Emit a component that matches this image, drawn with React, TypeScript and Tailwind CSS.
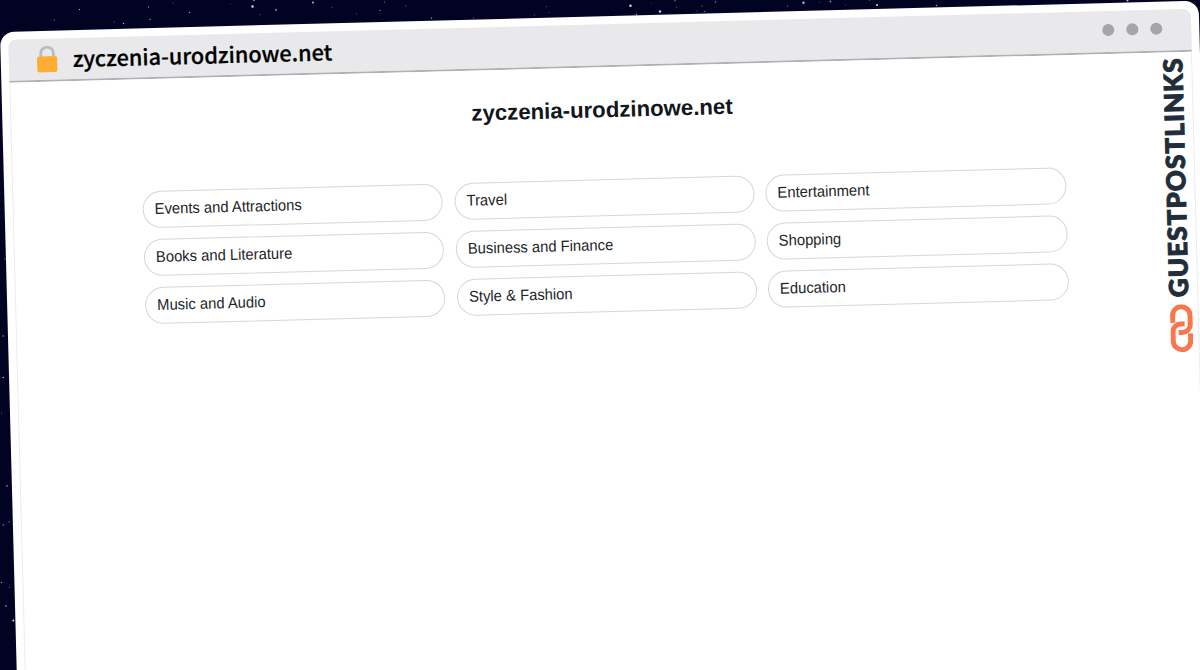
const categories = [
  "Events and Attractions",
  "Travel",
  "Entertainment",
  "Books and Literature",
  "Business and Finance",
  "Shopping",
  "Music and Audio",
  "Style & Fashion",
  "Education",
];

// x, y, radius, opacity
const stars = [
  [79.5, 9.5, 0.7, 0.7], [54.5, 20, 0.6, 0.6], [148.5, 7, 0.7, 0.6], [173, 3, 0.5, 0.5],
  [189.5, 12.5, 0.8, 0.6], [150, 19.5, 0.7, 0.7], [123.5, 23.5, 0.7, 0.8], [114.5, 22, 0.5, 0.5],
  [252.5, 6.5, 1.3, 0.9], [254, 0.5, 0.8, 0.7], [230.5, 4, 0.5, 0.4], [276, 10, 1, 0.6],
  [260, 14.5, 0.6, 0.4], [313, 2.5, 0.9, 0.9], [332, 7.5, 0.6, 0.4], [356.5, 14, 0.6, 0.4],
  [384.5, 2, 0.7, 0.4], [380, 10.5, 0.8, 0.5], [405.5, 6, 0.8, 0.3], [431.5, 18, 0.7, 0.7],
  [473.5, 18, 0.6, 0.6], [546.5, 6.5, 0.7, 0.3], [534.5, 15, 0.7, 0.3], [549, 12.5, 0.6, 0.3],
  [630.5, 5.8, 1.3, 0.9], [660, 11.5, 1.2, 0.9], [636.5, 14.5, 0.7, 0.7], [651, 3, 0.6, 0.3],
  [675, 0.5, 0.9, 0.4], [676.5, 7, 0.6, 0.4], [702, 6, 0.7, 0.4], [715.5, 2, 0.8, 0.6],
  [704.5, 11.5, 0.7, 0.5], [697, 11, 0.6, 0.4], [787.5, 6, 0.7, 0.4], [803.5, 2.8, 1.2, 0.8],
  [819.5, 2, 0.5, 0.4], [830.5, 1.5, 0.9, 0.6], [845.5, 5, 0.6, 0.3], [869.5, 0.5, 0.6, 0.4],
  [877, 5, 1.1, 0.9], [936.5, 5.5, 0.8, 0.7], [1127.5, 0.5, 0.9, 0.9],
  [5, 259, 0.7, 0.5], [3.2, 336, 0.8, 0.6], [3.2, 377.5, 0.8, 0.8], [1.5, 413, 0.6, 0.5],
  [7, 486, 0.9, 0.5], [3.3, 525, 0.8, 0.6], [9, 522, 0.8, 0.4], [1.5, 582.5, 0.8, 0.6],
  [9.5, 587.5, 0.6, 0.4], [6, 606, 0.9, 0.5], [13.3, 620.5, 0.9, 1],
];

const StarrySky = () => (
  <svg className="absolute inset-0 h-full w-full" viewBox="0 0 1200 670">
    {stars.map(([x, y, r, o], index) => (
      <circle key={index} cx={x} cy={y} r={r} fill="#dfe2ff" opacity={o} />
    ))}
  </svg>
);

const LockIcon = () => (
  <svg className="h-[27px] w-[21px]" viewBox="0 0 21 27">
    <path d="M4.2 13V7.6a6.3 6.3 0 0 1 12.6 0V13" fill="none" stroke="#b3bdc2" strokeWidth="2.8" />
    <rect x="0.3" y="10.5" width="20.2" height="16" rx="2.2" fill="#ffac33" />
  </svg>
);

const ChainIcon = () => (
  <svg className="h-[48px] w-[23px]" viewBox="0 0 23 48" fill="none" stroke="#f9774c" strokeWidth="5">
    <path d="M2.8 18.5V11.2a8.6 8.6 0 0 1 17.4 0V20.5a7.8 7.8 0 0 1-7.8 7.8H8.4" />
    <path d="M20.2 29.5V36.8a8.6 8.6 0 0 1-17.4 0V27.5a7.8 7.8 0 0 1 7.8-7.8h4" />
  </svg>
);

const BrowserBar = () => (
  <div className="flex h-[43px] items-center justify-between rounded-t-[8px] border-b-2 border-[#b0b1b4] bg-[#e9e9eb] pr-[29px] pl-[28px]">
    <div className="flex items-center">
      <LockIcon />
      <p className="mb-[1px] ml-[15px] font-['Noto_Sans_CJK_JP',sans-serif] text-[21.7px] leading-[30px] font-medium text-black [-webkit-text-stroke:0.25px_#000]">
        zyczenia-urodzinowe.net
      </p>
    </div>
    <div className="mb-[4px] flex gap-[12px]">
      <span className="h-3 w-3 rounded-full bg-[#a5a6aa]" />
      <span className="h-3 w-3 rounded-full bg-[#a5a6aa]" />
      <span className="h-3 w-3 rounded-full bg-[#a5a6aa]" />
    </div>
  </div>
);

const CategoryPage = () => (
  <div className="pt-[27px] pl-px text-[#212529]">
    <h1 className="text-center text-[22.2px] leading-[32px] font-bold text-[#13171c]">
      zyczenia-urodzinowe.net
    </h1>
    <div className="mx-auto mt-[53px] grid w-[924px] grid-cols-3 gap-x-[11.5px] gap-y-[11px]">
      {categories.map((item) => (
        <div
          key={item}
          className="flex h-[37px] items-center rounded-full border border-[#d6d7d9] px-[11px] pb-[2px] text-[15.6px]"
        >
          <span className="origin-left scale-x-[0.948]">{item}</span>
        </div>
      ))}
    </div>
  </div>
);

const App = () => {
  return (
    <div className="relative h-[670px] w-[1200px] overflow-hidden bg-[#020323] font-['Liberation_Sans',Arial,sans-serif]">
      <StarrySky />
      <div className="relative mt-[31.5px] h-[760px] w-[1198.5px] origin-top-left -rotate-[1.5deg] rounded-[14px] bg-white p-[8px]">
        <BrowserBar />
        <div className="h-full border-x border-[#ececee]">
          <CategoryPage />
        </div>
        <div className="absolute top-[56px] right-[14px] flex flex-col items-end gap-[7px]">
          <span className="rotate-180 font-['Lato',sans-serif] text-[26px] leading-[28px] font-black tracking-[1.1px] text-[#222d3a] [-webkit-text-stroke:1px_#222d3a] [writing-mode:vertical-rl]">
            GUESTPOSTLINKS
          </span>
          <ChainIcon />
        </div>
      </div>
    </div>
  );
};

export default App;
